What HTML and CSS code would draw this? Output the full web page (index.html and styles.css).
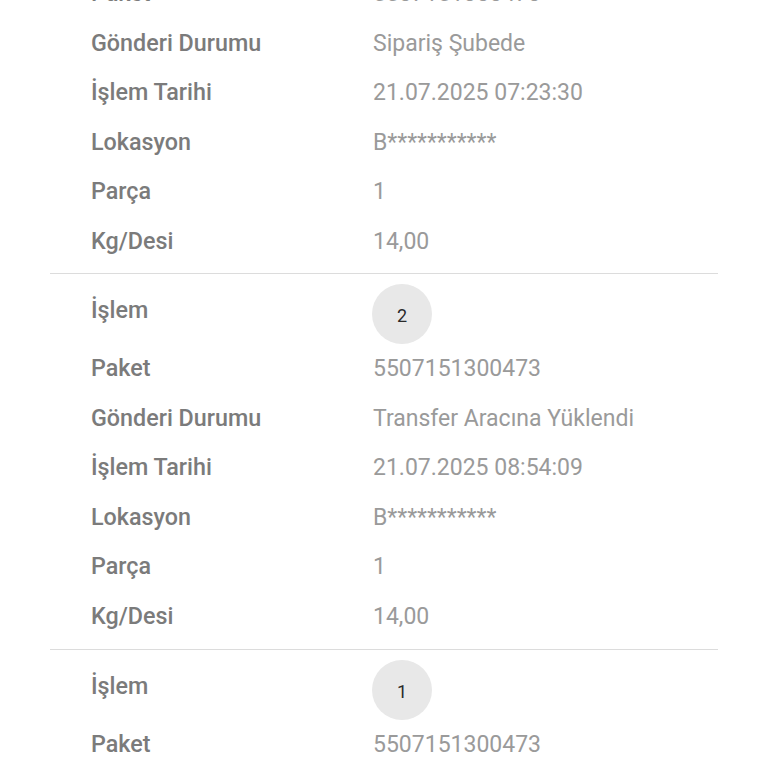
FILE: index.html
```html
<!DOCTYPE html>
<html lang="tr">
<head>
<meta charset="utf-8">
<title>Gönderi Hareketleri</title>
<link rel="stylesheet" href="styles.css">
</head>
<body>
<div class="list">
  <section class="group first">
    <div class="row"><span class="label">Paket</span><span class="value">5507151300473</span></div>
    <div class="row"><span class="label">Gönderi Durumu</span><span class="value">Sipariş Şubede</span></div>
    <div class="row"><span class="label">İşlem Tarihi</span><span class="value">21.07.2025 07:23:30</span></div>
    <div class="row"><span class="label">Lokasyon</span><span class="value">B***********</span></div>
    <div class="row"><span class="label">Parça</span><span class="value">1</span></div>
    <div class="row"><span class="label">Kg/Desi</span><span class="value">14,00</span></div>
  </section>
  <section class="group">
    <div class="row step"><span class="label">İşlem</span><span class="value"><span class="badge">2</span></span></div>
    <div class="row"><span class="label">Paket</span><span class="value">5507151300473</span></div>
    <div class="row"><span class="label">Gönderi Durumu</span><span class="value">Transfer Aracına Yüklendi</span></div>
    <div class="row"><span class="label">İşlem Tarihi</span><span class="value">21.07.2025 08:54:09</span></div>
    <div class="row"><span class="label">Lokasyon</span><span class="value">B***********</span></div>
    <div class="row"><span class="label">Parça</span><span class="value">1</span></div>
    <div class="row"><span class="label">Kg/Desi</span><span class="value">14,00</span></div>
  </section>
  <section class="group">
    <div class="row step"><span class="label">İşlem</span><span class="value"><span class="badge">1</span></span></div>
    <div class="row"><span class="label">Paket</span><span class="value">5507151300473</span></div>
    <div class="row"><span class="label">Gönderi Durumu</span><span class="value">Sipariş Şubede</span></div>
    <div class="row"><span class="label">İşlem Tarihi</span><span class="value">21.07.2025 07:23:30</span></div>
  </section>
</div>
</body>
</html>
```
FILE: styles.css
```css
html, body {
  margin: 0;
  padding: 0;
  background: #ffffff;
  overflow: hidden;
}
body {
  font-family: Roboto, "Liberation Sans", sans-serif;
}
.list {
  margin: -31px 50px 0 50px;
}
.group {
  border-top: 1px solid #dcdcdc;
  padding-top: 10px;
  padding-bottom: 8px;
}
.group.first {
  border-top: none;
  padding-top: 0;
  padding-bottom: 7px;
}
.row {
  display: flex;
  align-items: center;
  height: 49.5px;
  padding-left: 41px;
}
.row.step {
  height: 60px;
  align-items: flex-start;
}
.label {
  width: 282px;
  flex: none;
  font-size: 23.3px;
  font-weight: 500;
  color: #7b7b7b;
  line-height: 49.5px;
}
.step .label {
  padding-top: 2px;
}
.value {
  font-size: 23px;
  font-weight: 400;
  color: #9a9a9a;
  line-height: 49.5px;
}
.step .value {
  line-height: 60px;
}
.badge {
  display: flex;
  align-items: center;
  justify-content: center;
  width: 60px;
  height: 60px;
  border-radius: 50%;
  background: #e8e8e8;
  color: #2a2a2a;
  font-size: 18px;
  line-height: 1;
  padding-top: 4px;
  box-sizing: border-box;
  margin-left: -1px;
}
```
